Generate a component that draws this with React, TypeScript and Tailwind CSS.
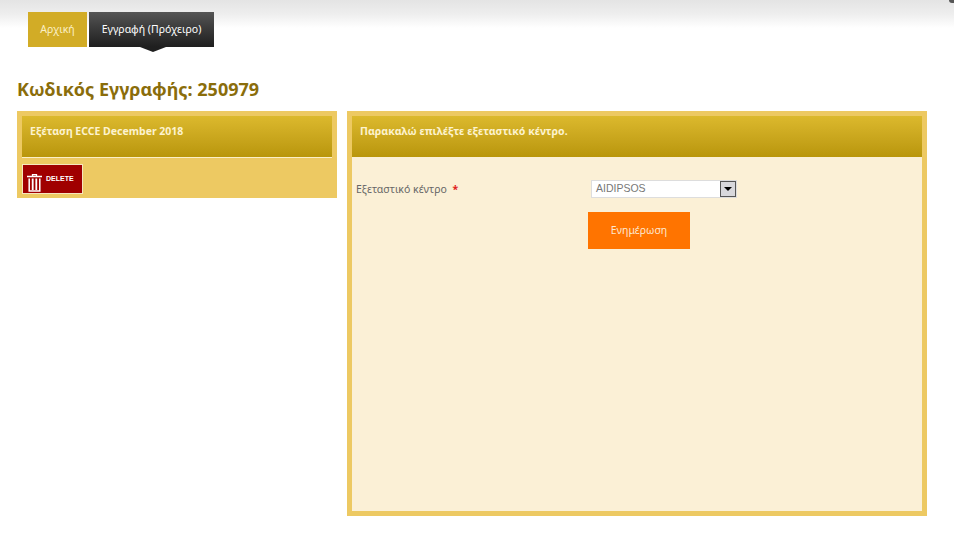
export default function App() {
  return (
    <div className="relative h-[554px] w-[954px] overflow-hidden bg-white font-['Noto_Sans',sans-serif]">
      <div className="absolute left-0 top-0 h-[28px] w-full bg-gradient-to-b from-[#e4e4e4] via-[#eeeeee] to-white" />
      <div className="absolute right-0 top-0 h-[3px] w-[5px] rounded-bl-[5px] bg-[#555]" />
      <nav className="relative flex h-[35px] gap-[2px] pl-[28px] pt-0 text-[10.5px] leading-[35px]" style={{ marginTop: 0, top: 12 }}>
        <a className="w-[59px] bg-[#d2ac26] text-center text-[#fbefc4]">Αρχική</a>
        <a className="relative w-[125px] bg-gradient-to-b from-[#555555] to-[#1f1f1f] text-center text-white">
          Εγγραφή (Πρόχειρο)
          <span className="absolute left-[51px] top-[35px] h-0 w-0 border-x-[13px] border-t-[5px] border-x-transparent border-t-[#1f1f1f]" />
        </a>
      </nav>
      <div className="px-[17px] pt-[12px]">
        <h1 className="mt-[30px] h-[24px] text-[18px] font-bold leading-[24px] text-[#8a6d0b]">
          Κωδικός Εγγραφής: 250979
        </h1>
        <div className="mt-[10px] flex items-start gap-[10px]">
          <section className="h-[87px] w-[320px] bg-[#edc962] p-[5px]">
            <div className="h-[41px] bg-gradient-to-b from-[#dcb92d] to-[#b9960a] pl-[8px] pt-[8px] text-[10.5px] font-bold leading-[15px] text-[#fdf3cf]">
              Εξέταση ECCE December 2018
            </div>
            <div className="h-px bg-[#fbefc8]" />
            <div className="pt-[6px]">
              <button className="flex h-[30px] w-[61px] items-start border border-[#f5e6bd] bg-[#a00000] pl-[4px] text-white">
                <svg width="16" height="18" viewBox="0 0 16 18" className="mt-[9px] shrink-0" fill="none">
                  <path d="M0 2.5h15M5.5 2.5V.7h4v1.8" stroke="#fff" strokeWidth="1.3" />
                  <path d="M2.2 4.5v12.5h10.6V4.5" stroke="#fff" strokeWidth="1.5" />
                  <path d="M5.7 4.5v11.5M9.3 4.5v11.5" stroke="#fff" strokeWidth="1.8" />
                </svg>
                <span className="ml-[3px] mt-[9px] font-['Liberation_Sans',sans-serif] text-[7px] font-bold leading-[9px]">DELETE</span>
              </button>
            </div>
          </section>
          <section className="h-[405px] w-[580px] bg-[#edc962] p-[5px]">
            <div className="flex h-full flex-col bg-[#fbf0d6]">
              <div className="h-[41px] shrink-0 bg-gradient-to-b from-[#dcb92d] to-[#b9960a] pl-[8px] pt-[8px] text-[10.5px] font-bold leading-[15px] text-[#fdf3cf]">
                Παρακαλώ επιλέξτε εξεταστικό κέντρο.
              </div>
              <div className="flex pl-[4px] pt-[23px]">
                <label className="w-[235px] text-[10.5px] leading-[18px] text-[#666]">
                  Εξεταστικό κέντρο <span className="ml-[3px] font-bold text-[#e02020]">*</span>
                </label>
                <div className="flex h-[18px] w-[146px] items-center border border-[#ddd] bg-white pl-[4px] font-['Liberation_Sans',sans-serif] text-[10.5px] text-[#777]">
                  <span className="grow">AIDIPSOS</span>
                  <span className="flex h-[16px] w-[16px] items-center justify-center border border-[#555] bg-[#d8d8dc]">
                    <span className="h-0 w-0 border-x-[4px] border-t-[4px] border-x-transparent border-t-black" />
                  </span>
                </div>
              </div>
              <div className="pl-[236px] pt-[14px]">
                <button className="h-[37px] w-[102px] bg-[#ff7400] text-[10.5px] text-[#fde7cf]">Ενημέρωση</button>
              </div>
            </div>
          </section>
        </div>
      </div>
    </div>
  );
}
